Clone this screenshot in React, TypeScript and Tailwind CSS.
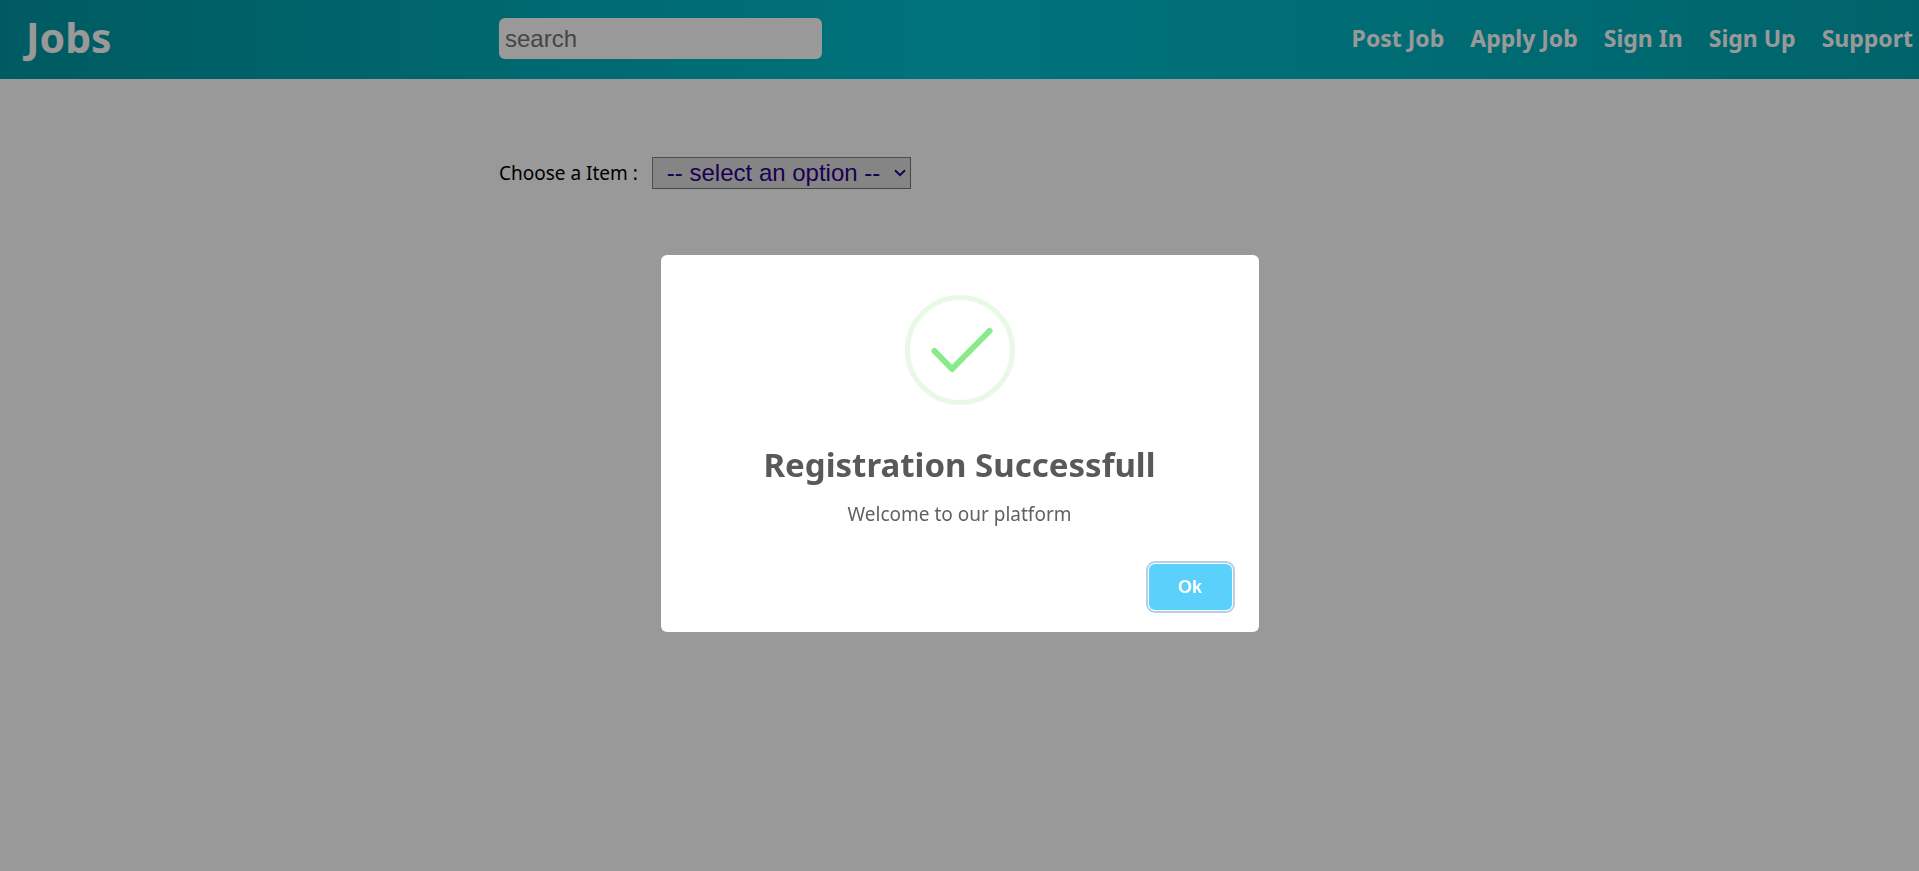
const links = ["Post Job", "Apply Job", "Sign In", "Sign Up", "Support"];

function Header() {
  return (
    <header className="grid h-[79px] grid-cols-[26%_1fr_auto] items-center bg-linear-to-r from-[#0097a2] via-[#00c0d0] to-[#00a6b2] pb-0.5 text-white">
      <a href="#home" className="pb-0.5 pl-6.5 text-[41px] leading-none font-bold">
        Jobs
      </a>
      <input
        type="search"
        aria-label="search"
        placeholder="search"
        className="h-[41px] w-[323px] rounded-md bg-white px-1.5 font-['Liberation_Sans',sans-serif] text-[24px] text-black placeholder:text-[#757575]"
      />
      <nav aria-label="Main" className="flex gap-6.5 pr-1.5 text-[23px] leading-none font-bold">
        {links.map((label) => (
          <a key={label} href="#nav">
            {label}
          </a>
        ))}
      </nav>
    </header>
  );
}

function ItemPicker() {
  return (
    <main className="flex items-center gap-3.5 pt-[78px] pl-[26%]">
      <label htmlFor="item" className="text-[19px] text-black">
        Choose a Item :
      </label>
      <span className="grid h-8 w-[259px] items-center border border-t-[#808080] border-r-[#767676] border-b-[#767676] border-l-[#808080] bg-[#dedede] text-[#2b0089]">
        <select
          id="item"
          defaultValue=""
          className="col-start-1 row-start-1 h-full w-full appearance-none bg-transparent pl-3.5 font-['Liberation_Sans',sans-serif] text-[24px] leading-7"
        >
          <option value="">-- select an option --</option>
        </select>
        <svg
          viewBox="0 0 12 8"
          className="pointer-events-none col-start-1 row-start-1 mr-1 h-2 w-3 justify-self-end"
          fill="none"
          stroke="currentColor"
          strokeWidth="2"
          aria-hidden="true"
        >
          <path d="M1 1.2 6 6.2 11 1.2" />
        </svg>
      </span>
    </main>
  );
}

function SuccessDialog() {
  return (
    <div className="fixed inset-0 flex items-center justify-center bg-black/40">
      <section
        role="dialog"
        aria-modal="true"
        aria-labelledby="dialog-title"
        className="mt-4 flex w-[598px] flex-col items-center rounded-md bg-white pt-10 text-center"
      >
        <svg viewBox="0 0 110 110" className="size-[110px]" fill="none" aria-hidden="true">
          <circle cx="55" cy="55" r="52.5" stroke="#e8f9e6" strokeWidth="5" />
          <path
            d="M29.5 56 47 74 84.5 36"
            stroke="#86eb88"
            strokeWidth="6"
            strokeLinecap="round"
            strokeLinejoin="round"
          />
        </svg>
        <h1 id="dialog-title" className="mt-9 text-[33px] leading-12 font-bold text-[#595959]">
          Registration Successfull
        </h1>
        <p className="mt-[11px] text-[19px] leading-7 text-[#616161]">Welcome to our platform</p>
        <div className="mt-6.5 flex w-full justify-end px-[27px] pt-2.5 pb-[22px]">
          <button
            type="button"
            className="h-[46px] w-[83px] rounded-md bg-[#5bd0fb] font-['Liberation_Sans',sans-serif] text-[18px] font-bold text-white shadow-[0_0_0_1px_#fff,0_0_0_3px_#b4d0e2]"
          >
            Ok
          </button>
        </div>
      </section>
    </div>
  );
}

export default function App() {
  return (
    <div className="min-h-screen bg-white font-['Noto_Sans',sans-serif]">
      <Header />
      <ItemPicker />
      <SuccessDialog />
    </div>
  );
}
